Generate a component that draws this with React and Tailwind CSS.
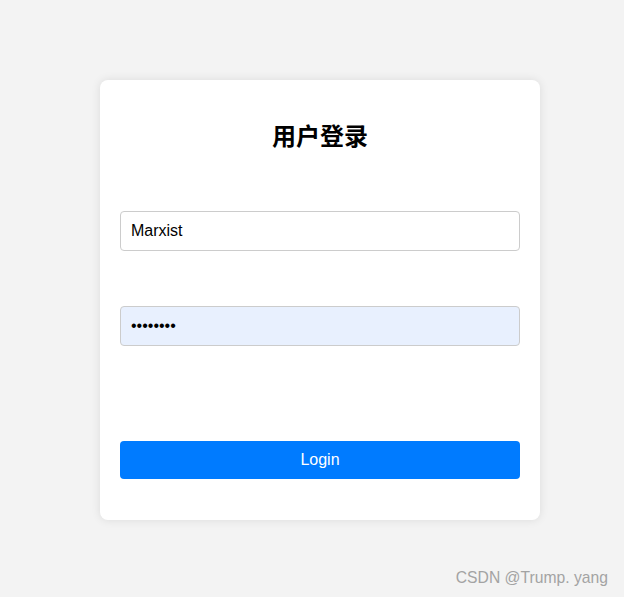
import React from "react";

const App = () => {
  return (
    <div
      className="relative min-h-screen w-full bg-[#f3f3f3] pt-[80px] pl-[100px]"
      style={{ fontFamily: '"Liberation Sans", Arial, "Noto Sans CJK SC", sans-serif' }}
    >
      {/* Login card */}
      <div className="w-[440px] h-[440px] bg-white rounded-lg shadow-[0_0_10px_rgba(0,0,0,0.1)] px-5 pt-5">
        <h2
          className="mt-[17px] text-center text-[24px] font-bold leading-[35px] text-black"
          style={{ fontFamily: '"Noto Sans CJK SC", sans-serif' }}
        >
          用户登录
        </h2>

        <input
          type="text"
          defaultValue="Marxist"
          className="mt-[59px] block w-[400px] h-[40px] px-[10px] border border-[#ccc] rounded-[4px] text-[16px] text-black bg-white outline-none"
        />

        <input
          type="password"
          defaultValue="password"
          className="mt-[55px] block w-[400px] h-[40px] px-[10px] border border-[#ccc] rounded-[4px] text-[16px] text-black bg-[#e8f0fe] outline-none"
        />

        <button className="mt-[95px] block w-[400px] h-[38px] rounded-[4px] bg-[#007bff] text-white text-[16px]">
          Login
        </button>
      </div>

      {/* Watermark */}
      <div className="absolute right-[16px] top-[568px] text-[15.7px] text-[#a3a3a3] leading-[20px]">
        CSDN @Trump. yang
      </div>
    </div>
  );
};

export default App;
